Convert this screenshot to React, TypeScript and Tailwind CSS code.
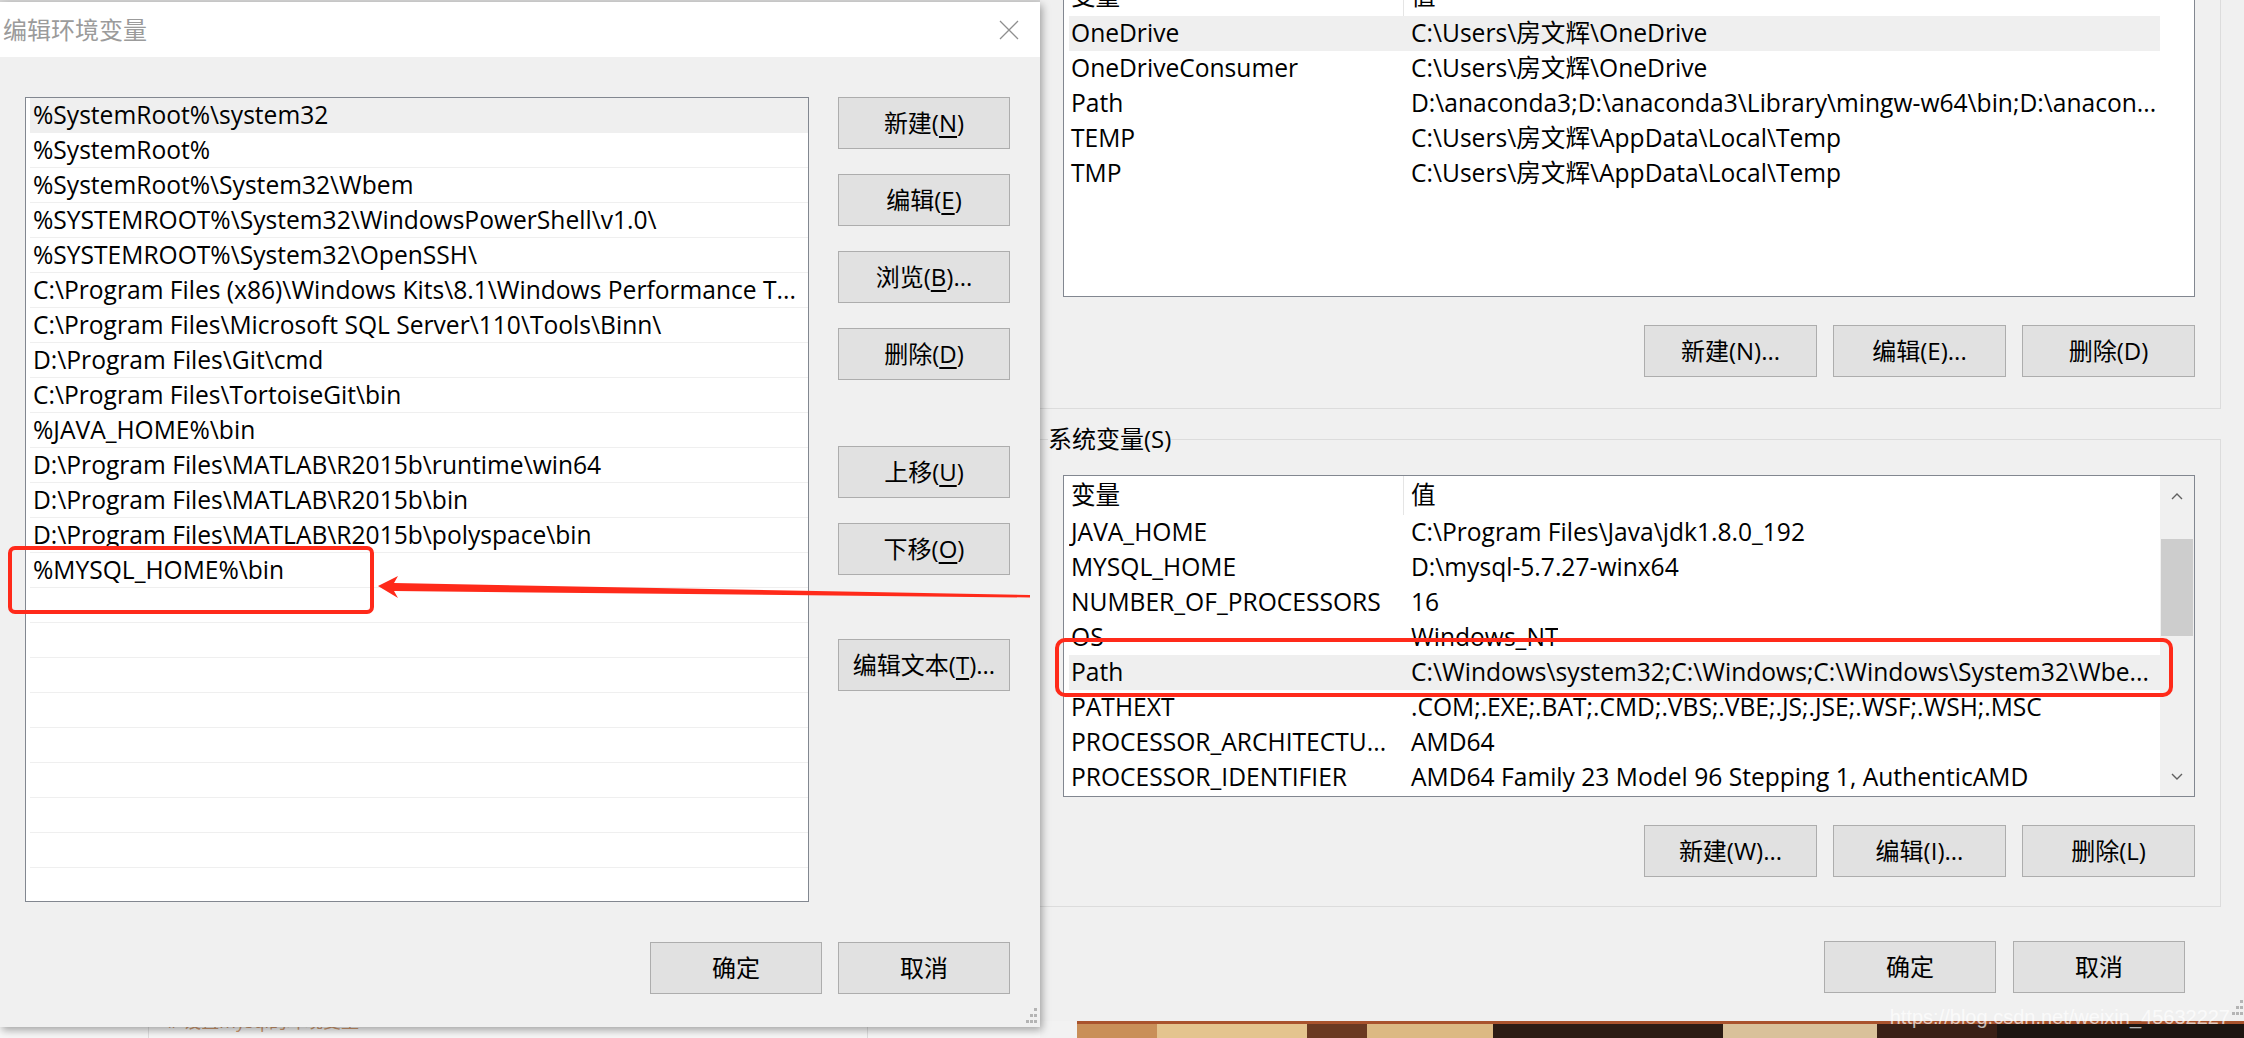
import React from 'react';

type Row = { name: string; value: string; selected?: boolean };

const pathEntries = [
  '%SystemRoot%\\system32',
  '%SystemRoot%',
  '%SystemRoot%\\System32\\Wbem',
  '%SYSTEMROOT%\\System32\\WindowsPowerShell\\v1.0\\',
  '%SYSTEMROOT%\\System32\\OpenSSH\\',
  'C:\\Program Files (x86)\\Windows Kits\\8.1\\Windows Performance T...',
  'C:\\Program Files\\Microsoft SQL Server\\110\\Tools\\Binn\\',
  'D:\\Program Files\\Git\\cmd',
  'C:\\Program Files\\TortoiseGit\\bin',
  '%JAVA_HOME%\\bin',
  'D:\\Program Files\\MATLAB\\R2015b\\runtime\\win64',
  'D:\\Program Files\\MATLAB\\R2015b\\bin',
  'D:\\Program Files\\MATLAB\\R2015b\\polyspace\\bin',
  '%MYSQL_HOME%\\bin',
];

const userVars: Row[] = [
  { name: 'OneDrive', value: 'C:\\Users\\房文辉\\OneDrive', selected: true },
  { name: 'OneDriveConsumer', value: 'C:\\Users\\房文辉\\OneDrive' },
  { name: 'Path', value: 'D:\\anaconda3;D:\\anaconda3\\Library\\mingw-w64\\bin;D:\\anacon...' },
  { name: 'TEMP', value: 'C:\\Users\\房文辉\\AppData\\Local\\Temp' },
  { name: 'TMP', value: 'C:\\Users\\房文辉\\AppData\\Local\\Temp' },
];

const systemVars: Row[] = [
  { name: 'JAVA_HOME', value: 'C:\\Program Files\\Java\\jdk1.8.0_192' },
  { name: 'MYSQL_HOME', value: 'D:\\mysql-5.7.27-winx64' },
  { name: 'NUMBER_OF_PROCESSORS', value: '16' },
  { name: 'OS', value: 'Windows_NT' },
  { name: 'Path', value: 'C:\\Windows\\system32;C:\\Windows;C:\\Windows\\System32\\Wbe...', selected: true },
  { name: 'PATHEXT', value: '.COM;.EXE;.BAT;.CMD;.VBS;.VBE;.JS;.JSE;.WSF;.WSH;.MSC' },
  { name: 'PROCESSOR_ARCHITECTU...', value: 'AMD64' },
  { name: 'PROCESSOR_IDENTIFIER', value: 'AMD64 Family 23 Model 96 Stepping 1, AuthenticAMD' },
];

function Btn({ children, className = '' }: { children: React.ReactNode; className?: string }) {
  return (
    <button className={`h-[52px] shrink-0 bg-[#e1e1e1] border border-[#adadad] text-[24px] text-black flex items-center justify-center ${className}`}>
      {children}
    </button>
  );
}

function Grip() {
  return (
    <svg width="16" height="16" viewBox="0 0 16 16">
      <rect x="13" y="1" width="3" height="3" fill="#b4b4b4" />
      <rect x="9" y="7" width="3" height="3" fill="#b4b4b4" />
      <rect x="13" y="7" width="3" height="3" fill="#b4b4b4" />
      <rect x="5" y="13" width="3" height="3" fill="#b4b4b4" />
      <rect x="9" y="13" width="3" height="3" fill="#b4b4b4" />
      <rect x="13" y="13" width="3" height="3" fill="#b4b4b4" />
    </svg>
  );
}

function VarRow({ row }: { row: Row }) {
  return (
    <div className={`h-[35px] flex items-center whitespace-nowrap ${row.selected ? 'bg-[#efefef]' : ''}`}>
      <div className="w-[335px] shrink-0 pl-[2px] overflow-hidden">{row.name}</div>
      <div className="pl-[7px] overflow-hidden">{row.value}</div>
    </div>
  );
}

function VarHeader() {
  return (
    <div className="h-[39px] flex items-center shrink-0">
      <div className="w-[335px] h-full shrink-0 pl-[2px] flex items-center border-r border-[#e5e5e5]">变量</div>
      <div className="pl-[7px]">值</div>
    </div>
  );
}

function Chevron({ up }: { up?: boolean }) {
  return (
    <svg width="12" height="8" viewBox="0 0 12 8">
      <path d={up ? 'M1 7 L6 2 L11 7' : 'M1 1 L6 6 L11 1'} fill="none" stroke="#606060" strokeWidth="1.4" />
    </svg>
  );
}

export default function App() {
  return (
    <div className="relative w-[2244px] h-[1038px] overflow-hidden flex bg-[#f0f0f0] text-black font-['Open_Sans','Noto_Sans_CJK_SC',sans-serif] text-[24px]">
      {/* edit dialog */}
      <div className="w-[1040px] shrink-0 flex flex-col">
        <div className="h-[2px] bg-[#d6d6d6]" />
        <div className="relative z-10 h-[1025px] flex flex-col bg-[#f0f0f0] shadow-[2px_3px_8px_rgba(0,0,0,0.35)]">
          <div className="h-[55px] bg-white flex items-center justify-between pl-[3px] pr-[20px]">
            <span className="text-[#9b9b9b]">编辑环境变量</span>
            <svg width="22" height="22" viewBox="0 0 22 22">
              <path d="M2 2 L20 20 M20 2 L2 20" stroke="#8f8f8f" strokeWidth="1.3" />
            </svg>
          </div>

          <div className="flex pl-[25px] pt-[40px]">
            <div className="w-[784px] h-[805px] bg-white border border-[#828790] pl-[4px] overflow-hidden text-[24.6px]">
              {Array.from({ length: 23 }).map((_, i) => (
                <div
                  key={i}
                  className={`h-[35px] border-b border-[#efefef] px-[3px] leading-[34px] whitespace-nowrap overflow-hidden ${i === 0 ? 'bg-[#efefef]' : ''}`}
                >
                  {pathEntries[i] ?? ''}
                </div>
              ))}
            </div>
            <div className="ml-[29px] flex flex-col w-[172px]">
              <Btn>新建(<u className="underline-offset-4">N</u>)</Btn>
              <Btn className="mt-[25px]">编辑(<u className="underline-offset-4">E</u>)</Btn>
              <Btn className="mt-[25px]">浏览(<u className="underline-offset-4">B</u>)...</Btn>
              <Btn className="mt-[25px]">删除(<u className="underline-offset-4">D</u>)</Btn>
              <Btn className="mt-[66px]">上移(<u className="underline-offset-4">U</u>)</Btn>
              <Btn className="mt-[25px]">下移(<u className="underline-offset-4">O</u>)</Btn>
              <Btn className="mt-[64px]">编辑文本(<u className="underline-offset-4">T</u>)...</Btn>
            </div>
          </div>

          <div className="mt-[40px] flex justify-end gap-[16px] pr-[30px]">
            <Btn className="w-[172px]">确定</Btn>
            <Btn className="w-[172px]">取消</Btn>
          </div>
          <div className="flex-1 flex justify-end items-end pr-[3px] pb-[4px]">
            <Grip />
          </div>
        </div>
        {/* page behind, peeking under the dialog */}
        <div className="h-[11px] flex bg-[#f7f7f7] overflow-hidden">
          <div className="w-[149px] border-r border-[#dedede]" />
          <div className="w-[719px] border-r border-[#dedede] pl-[18px] overflow-hidden">
            <div className="-mt-[17px] text-[18px] leading-[22px] text-[#d09a70] whitespace-nowrap"># 设置mysql的环境变量</div>
          </div>
        </div>
      </div>

      {/* environment variables window */}
      <div className="flex-1 flex flex-col overflow-hidden">
        <div className="h-[1021px] shrink-0 flex flex-col pr-[23px]">
          {/* user variables */}
          <div className="h-[409px] shrink-0 flex flex-col border-r border-b border-[#dcdcdc]">
            <div className="-mt-[24px] ml-[23px] mr-[25px] h-[321px] shrink-0 bg-white border border-[#828790] flex text-[24.6px]">
              <div className="flex-1 pl-[5px] flex flex-col overflow-hidden">
                <VarHeader />
                {userVars.map((r) => (
                  <VarRow key={r.name} row={r} />
                ))}
              </div>
              <div className="w-[34px]" />
            </div>
            <div className="mt-[28px] mr-[25px] flex justify-end gap-[16px]">
              <Btn className="w-[173px]">新建(N)...</Btn>
              <Btn className="w-[173px]">编辑(E)...</Btn>
              <Btn className="w-[173px]">删除(D)</Btn>
            </div>
          </div>

          {/* system variables */}
          <fieldset className="mt-[16px] shrink-0 border-t border-r border-b border-l-0 border-[#dcdcdc] pl-[8px] pb-[29px] flex flex-col">
            <legend className="px-0 leading-[28px]">系统变量(S)</legend>
            <div className="mt-[22px] ml-[15px] mr-[25px] h-[322px] shrink-0 bg-white border border-[#828790] flex text-[24.6px]">
              <div className="flex-1 pl-[5px] flex flex-col overflow-hidden">
                <VarHeader />
                {systemVars.map((r) => (
                  <VarRow key={r.name} row={r} />
                ))}
              </div>
              <div className="w-[34px] bg-[#f0f0f0] flex flex-col items-center">
                <div className="h-[40px] flex items-center justify-center">
                  <Chevron up />
                </div>
                <div className="mt-[23px] w-[32px] h-[97px] bg-[#cdcdcd]" />
                <div className="flex-1" />
                <div className="h-[38px] flex items-center justify-center">
                  <Chevron />
                </div>
              </div>
            </div>
            <div className="mt-[28px] mr-[25px] flex justify-end gap-[16px]">
              <Btn className="w-[173px]">新建(W)...</Btn>
              <Btn className="w-[173px]">编辑(I)...</Btn>
              <Btn className="w-[173px]">删除(L)</Btn>
            </div>
          </fieldset>

          <div className="mt-[34px] mr-[36px] flex justify-end gap-[17px]">
            <Btn className="w-[172px]">确定</Btn>
            <Btn className="w-[172px]">取消</Btn>
          </div>
          <div className="flex-1 flex justify-end items-end -mr-[22px] pb-[6px]">
            <Grip />
          </div>
        </div>

        {/* desktop wallpaper strip */}
        <div className="flex-1 flex">
          <div className="w-[37px] bg-[#f2f2f2]" />
          <div className="flex-1 flex flex-col">
            <div className="h-[3px] bg-[#a9532d]" />
            <div className="flex-1 flex">
              <div className="w-[80px] bg-[#c98f58]" />
              <div className="w-[150px] bg-[#e4c48e]" />
              <div className="w-[60px] bg-[#6b3a22]" />
              <div className="w-[126px] bg-[#dcb983]" />
              <div className="w-[230px] bg-[#2c1c14]" />
              <div className="w-[154px] bg-[#d9c19a]" />
              <div className="w-[120px] bg-[#3a2016]" />
              <div className="flex-1 bg-[#1d1511]" />
            </div>
          </div>
        </div>
      </div>

      {/* annotations */}
      <svg className="absolute inset-0 pointer-events-none z-20" width="2244" height="1038">
        <rect x="10" y="548" width="362" height="64" rx="5" fill="none" stroke="#ff2a1a" strokeWidth="4" />
        <rect x="1057" y="640" width="1114" height="55" rx="8" fill="none" stroke="#ff2a1a" strokeWidth="4" />
        <polygon points="378,586 398,576 394,583 1030,595 1030,597.5 394,591 398,598" fill="#ff2a1a" />
      </svg>
      <div className="absolute right-[14px] bottom-[6px] z-20 text-[20px] text-white/70 font-['Liberation_Sans',sans-serif] pointer-events-none">
        https://blog.csdn.net/weixin_45632227
      </div>
    </div>
  );
}
